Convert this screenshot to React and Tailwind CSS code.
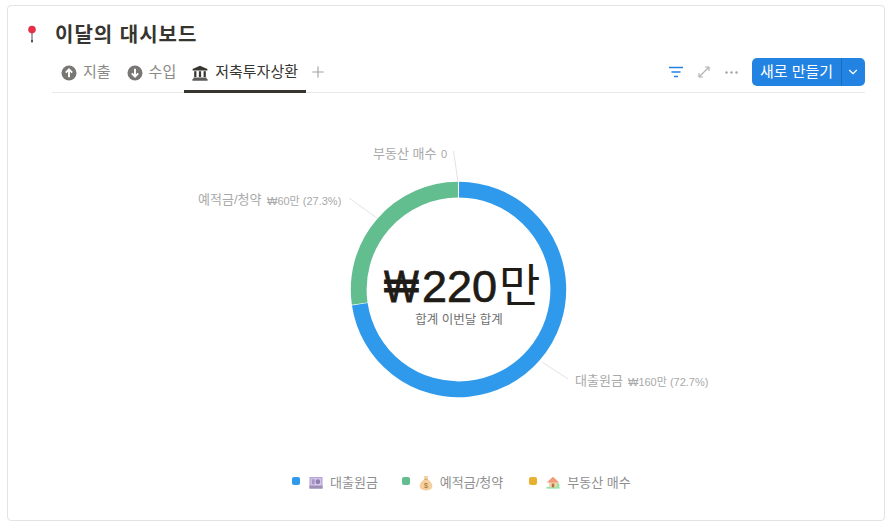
import React from 'react';
import { ChevronDown, Plus } from 'lucide-react';

const FONT = 'font-["Liberation_Sans","Noto_Sans_CJK_KR",sans-serif]';

function polar(deg, r) {
  const a = (deg * Math.PI) / 180;
  return [458.5 + r * Math.sin(a), 289.5 - r * Math.cos(a)];
}

function arc(from, to, r) {
  const [x1, y1] = polar(from, r);
  const [x2, y2] = polar(to, r);
  const large = to - from > 180 ? 1 : 0;
  return `M ${x1} ${y1} A ${r} ${r} 0 ${large} 1 ${x2} ${y2}`;
}

function UpIcon() {
  return (
    <svg width="16" height="16" viewBox="0 0 16 16">
      <circle cx="8" cy="8" r="7.5" fill="#787774" />
      <path d="M8 12.2V4.6M4.8 7.6 8 4.4l3.2 3.2" fill="none" stroke="#fff" strokeWidth="1.9" />
    </svg>
  );
}

function DownIcon() {
  return (
    <svg width="16" height="16" viewBox="0 0 16 16">
      <circle cx="8" cy="8" r="7.5" fill="#787774" />
      <path d="M8 3.8v7.6M4.8 8.4 8 11.6l3.2-3.2" fill="none" stroke="#fff" strokeWidth="1.9" />
    </svg>
  );
}

function BankIcon() {
  return (
    <svg width="16" height="16" viewBox="0 0 16 16" fill="#37352f">
      <path d="M8 .8 15.4 4v1.4H.6V4z" />
      <rect x="2.2" y="6.2" width="2.2" height="5.8" />
      <rect x="6.9" y="6.2" width="2.2" height="5.8" />
      <rect x="11.6" y="6.2" width="2.2" height="5.8" />
      <rect x="1.4" y="12.6" width="13.2" height="1.2" />
      <rect x=".4" y="14.2" width="15.2" height="1.4" />
    </svg>
  );
}

function Pin() {
  return (
    <svg width="10" height="18" viewBox="0 0 10 18">
      <rect x="4.2" y="7" width="1.6" height="10" fill="#8b9298" />
      <rect x="4.2" y="15" width="1.6" height="2.4" fill="#3a3f44" />
      <circle cx="5" cy="4.6" r="3.8" fill="#e5304a" />
    </svg>
  );
}

function NoteIcon() {
  return (
    <svg width="15" height="13" viewBox="0 0 15 13">
      <rect x="0.5" y="0.5" width="14" height="12.5" rx="0.5" fill="#b9a6d8" />
      <rect x="0.5" y="10" width="14" height="3" fill="#9d8fb5" />
      <rect x="2" y="2" width="11" height="7.5" fill="#d6cbe8" />
      <circle cx="9.5" cy="5.7" r="2.6" fill="#8e7fae" />
      <rect x="3" y="3" width="3" height="5.5" fill="#a794c6" />
    </svg>
  );
}

function BagIcon() {
  return (
    <svg width="14" height="16" viewBox="0 0 14 16">
      <path d="M5 1h4L8.4 4.2C11 5.6 13.4 8.4 13.4 11c0 3-2.8 4.4-6.4 4.4S.6 14 .6 11c0-2.6 2.4-5.4 5-6.8z" fill="#f6cf9f" />
      <path d="M5.2 4.2h3.6" stroke="#d9a066" strokeWidth="1" />
      <text x="7" y="12.6" fontSize="7" textAnchor="middle" fill="#9a6a35">$</text>
    </svg>
  );
}

function HouseIcon() {
  return (
    <svg width="16" height="15" viewBox="0 0 16 15">
      <rect x="0.5" y="12.5" width="15" height="2" fill="#8ee6a8" />
      <ellipse cx="13" cy="10.5" rx="2.4" ry="2.5" fill="#8ee6a8" />
      <rect x="3.5" y="6.5" width="9" height="6.5" fill="#f3d3a5" />
      <path d="M8 1 .8 7.5h14.4z" fill="#f29a7c" />
      <rect x="6.6" y="8.8" width="2.8" height="4.2" fill="#a9744a" />
    </svg>
  );
}

function Tab({ icon, label, active, gap }) {
  return (
    <div
      className={`flex h-[33px] items-center border-b-[3px] px-2 pb-[5px] ${gap} ${
        active ? 'border-[#37352f] text-[#37352f]' : 'border-transparent text-[#8a8985]'
      }`}
    >
      {icon}
      <span className="text-[15px]">{label}</span>
    </div>
  );
}

function LegendItem({ color, icon, label, className }) {
  return (
    <div className={`flex items-center ${className}`}>
      <span className={`mb-[4px] h-2 w-2 rounded-[2px] ${color}`} />
      <span className="ml-[9px] flex w-[14px] justify-center">{icon}</span>
      <span className="ml-[7px] text-[13px] text-[#8f8f8f]">{label}</span>
    </div>
  );
}

export default function App() {
  return (
    <div className={`h-[524px] w-[891px] overflow-hidden bg-white pt-[5px] pl-[7px] ${FONT}`}>
      <div className="flex h-[516px] w-[878px] flex-col rounded-[4px] border border-[#e3e3e3]">
        {/* Title */}
        <div className="flex h-[52px] shrink-0 items-end pb-[15px] pl-[19px]">
          <Pin />
          <h1 className="mb-[-5px] ml-[18px] text-[20px] leading-[26px] font-bold tracking-[1px] text-[#37352f]">
            이달의 대시보드
          </h1>
        </div>

        {/* Tabs and toolbar */}
        <div className="mr-[19px] ml-[44px] flex h-[35px] shrink-0 items-end justify-between border-b border-[#e9e9e7]">
          <div className="-mb-px ml-px flex items-end">
            <Tab gap="gap-[6px]" icon={<UpIcon />} label="지출" />
            <Tab gap="gap-[6px]" icon={<DownIcon />} label="수입" />
            <Tab gap="gap-[7px]" icon={<BankIcon />} label="저축투자상환" active />
            <Plus className="mb-[12px] ml-[3px] h-[18px] w-[18px] text-[#a3a29f]" strokeWidth={1.5} />
          </div>
          <div className="mb-[6px] flex items-center">
            <svg width="14" height="12" viewBox="0 0 14 12" fill="none" stroke="#2383e2" strokeWidth="1.5">
              <path d="M0 1.5h14M2.5 6h9M5 10.5h4" />
            </svg>
            <svg className="ml-[15px]" width="12" height="12" viewBox="0 0 12 12" fill="none" stroke="#b5b4b1" strokeWidth="1.2">
              <path d="M1 11 11 1M7 1h4v4M1 7v4h4" />
            </svg>
            <svg className="ml-[15px]" width="13" height="3" viewBox="0 0 13 3" fill="#a3a29f">
              <circle cx="1.5" cy="1.5" r="1.2" />
              <circle cx="6.5" cy="1.5" r="1.2" />
              <circle cx="11.5" cy="1.5" r="1.2" />
            </svg>
            <div className="ml-[14px] flex h-7 w-[113px] items-center rounded-[5px] bg-[#2383e2] text-white">
              <span className="flex h-full w-[90px] items-center justify-center border-r border-[#1a6cbd] text-[15px]">
                새로 만들기
              </span>
              <ChevronDown className="ml-[4px] h-[14px] w-[14px]" strokeWidth={2} />
            </div>
          </div>
        </div>

        {/* Donut */}
        <svg className="block shrink-0" width="876" height="368" viewBox="8 93 876 368">
          <path d={arc(0.3, 261.5, 99.8)} fill="none" stroke="#2f99eb" strokeWidth="15.8" />
          <path d={arc(261.9, 359.7, 99.8)} fill="none" stroke="#62bd8f" strokeWidth="15.8" />
          <g fill="none" stroke="#e4e4e4" strokeWidth="1">
            <path d="M453.5 151 458 182" />
            <path d="M349 198 377 218" />
            <path d="M542 362 568 379" />
          </g>
          <g fontSize="13" fill="#a9a9a9">
            <text x="373" y="158">부동산 매수</text>
            <text x="441" y="158" fontSize="11">0</text>
            <text x="198" y="204">예적금/청약</text>
            <text x="267" y="205" fontSize="11">₩60만 (27.3%)</text>
            <text x="575" y="385">대출원금</text>
            <text x="628" y="386" fontSize="11">₩160만 (72.7%)</text>
          </g>
          <g fontSize="45" fill="#1f1b16">
            <text transform="translate(384 302) scale(0.82 1)" stroke="#1f1b16" strokeWidth="1">₩</text>
            <text x="422" y="302" stroke="#1f1b16" strokeWidth="0.7">220</text>
            <text x="499" y="302">만</text>
          </g>
          <text x="459" y="324" fontSize="12.5" textAnchor="middle" fill="#6f6f6f">합계 이번달 합계</text>
        </svg>

        {/* Legend */}
        <div className="flex h-[40px] items-start pt-[12px] pl-[284px]">
          <LegendItem color="bg-[#2f99eb]" icon={<NoteIcon />} label="대출원금" />
          <LegendItem className="ml-[24px]" color="bg-[#62bd8f]" icon={<BagIcon />} label="예적금/청약" />
          <LegendItem className="ml-[26px]" color="bg-[#e8b030]" icon={<HouseIcon />} label="부동산 매수" />
        </div>
      </div>
    </div>
  );
}
